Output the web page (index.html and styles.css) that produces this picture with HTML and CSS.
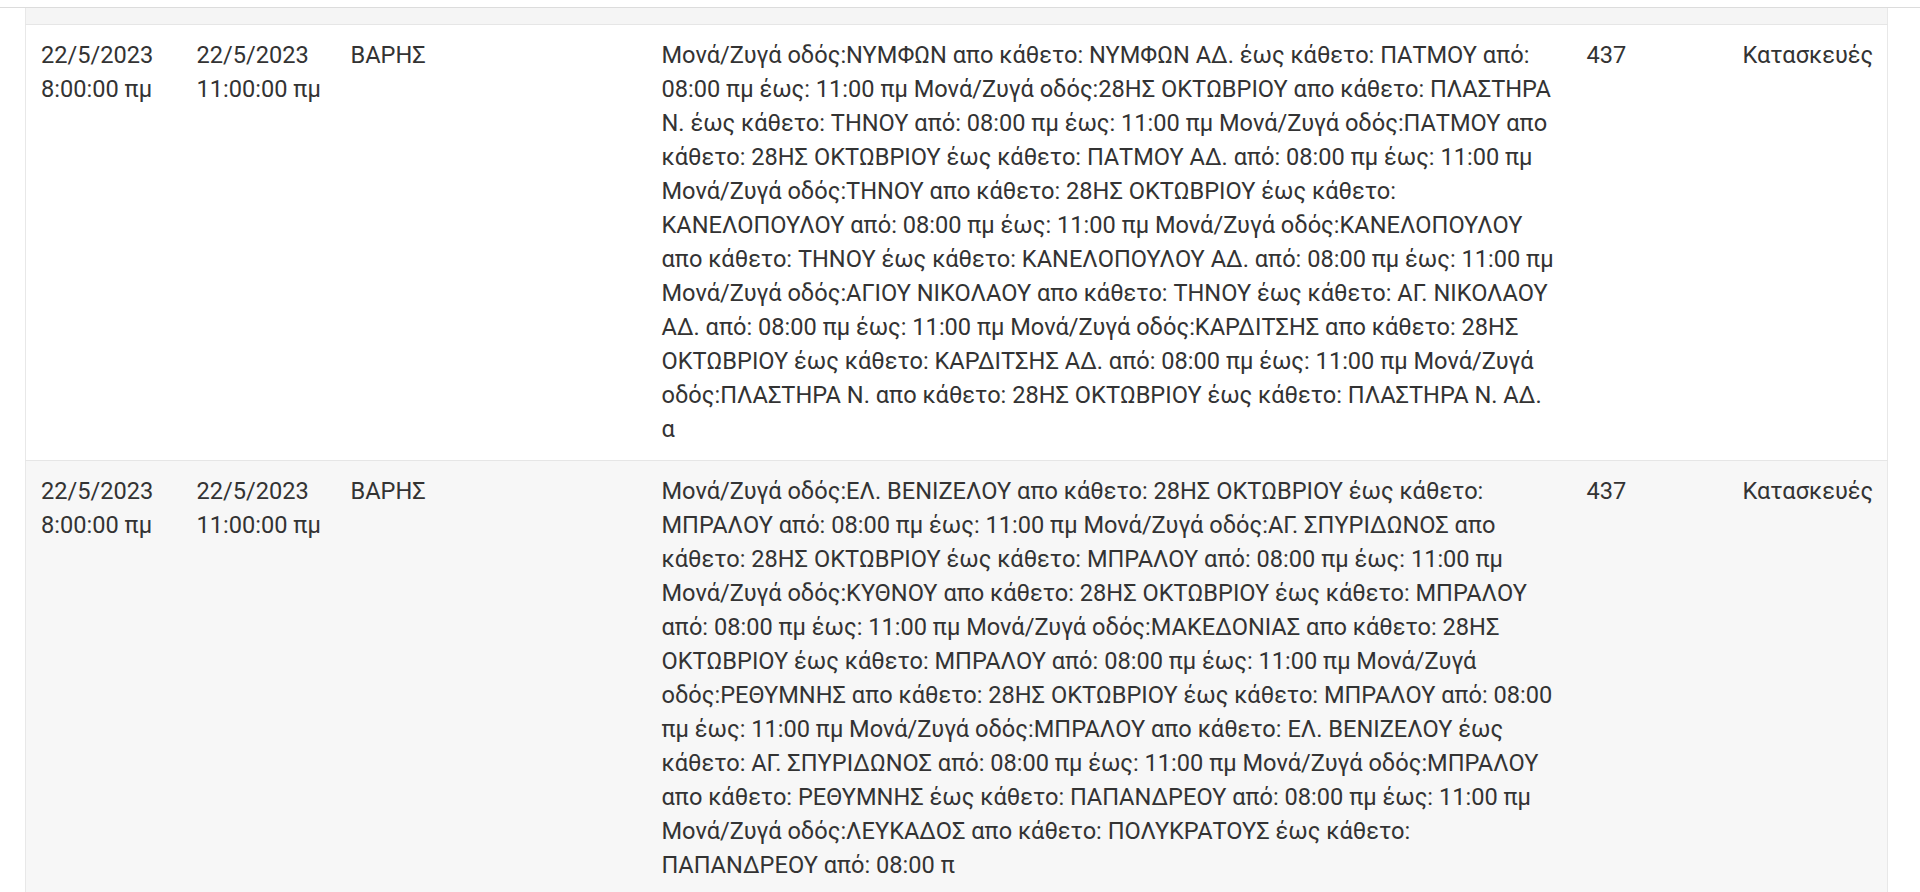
FILE: index.html
```html
<!DOCTYPE html>
<html lang="el">
<head>
  <meta charset="UTF-8">
  <meta name="viewport" content="width=device-width, initial-scale=1.0">
  <title>Διακοπές ρεύματος</title>
  <link rel="stylesheet" href="styles.css">
</head>
<body>

  <!-- Top strip above the results table -->
  <div class="topbar"></div>

  <!-- Results table -->
  <div class="table-wrap">
    <table class="outages">
      <colgroup>
        <col class="col-from">
        <col class="col-to">
        <col class="col-area">
        <col class="col-desc">
        <col class="col-num">
        <col class="col-reason">
      </colgroup>
      <thead>
        <tr class="head-row">
          <th></th><th></th><th></th><th></th><th></th><th></th>
        </tr>
      </thead>
      <tbody>
        <tr>
          <td class="when">22/5/2023<br>8:00:00 πμ</td>
          <td class="when">22/5/2023<br>11:00:00 πμ</td>
          <td>ΒΑΡΗΣ</td>
          <td>Μονά/Ζυγά οδός:ΝΥΜΦΩΝ απο κάθετο: ΝΥΜΦΩΝ ΑΔ. έως κάθετο: ΠΑΤΜΟΥ από: 08:00 πμ έως: 11:00 πμ Μονά/Ζυγά οδός:28ΗΣ ΟΚΤΩΒΡΙΟΥ απο κάθετο: ΠΛΑΣΤΗΡΑ Ν. έως κάθετο: ΤΗΝΟΥ από: 08:00 πμ έως: 11:00 πμ Μονά/Ζυγά οδός:ΠΑΤΜΟΥ απο κάθετο: 28ΗΣ ΟΚΤΩΒΡΙΟΥ έως κάθετο: ΠΑΤΜΟΥ ΑΔ. από: 08:00 πμ έως: 11:00 πμ Μονά/Ζυγά οδός:ΤΗΝΟΥ απο κάθετο: 28ΗΣ ΟΚΤΩΒΡΙΟΥ έως κάθετο: ΚΑΝΕΛΟΠΟΥΛΟΥ από: 08:00 πμ έως: 11:00 πμ Μονά/Ζυγά οδός:ΚΑΝΕΛΟΠΟΥΛΟΥ απο κάθετο: ΤΗΝΟΥ έως κάθετο: ΚΑΝΕΛΟΠΟΥΛΟΥ ΑΔ. από: 08:00 πμ έως: 11:00 πμ Μονά/Ζυγά οδός:ΑΓΙΟΥ ΝΙΚΟΛΑΟΥ απο κάθετο: ΤΗΝΟΥ έως κάθετο: ΑΓ. ΝΙΚΟΛΑΟΥ ΑΔ. από: 08:00 πμ έως: 11:00 πμ Μονά/Ζυγά οδός:ΚΑΡΔΙΤΣΗΣ απο κάθετο: 28ΗΣ ΟΚΤΩΒΡΙΟΥ έως κάθετο: ΚΑΡΔΙΤΣΗΣ ΑΔ. από: 08:00 πμ έως: 11:00 πμ Μονά/Ζυγά οδός:ΠΛΑΣΤΗΡΑ Ν. απο κάθετο: 28ΗΣ ΟΚΤΩΒΡΙΟΥ έως κάθετο: ΠΛΑΣΤΗΡΑ Ν. ΑΔ. α</td>
          <td>437</td>
          <td>Κατασκευές</td>
        </tr>
        <tr>
          <td class="when">22/5/2023<br>8:00:00 πμ</td>
          <td class="when">22/5/2023<br>11:00:00 πμ</td>
          <td>ΒΑΡΗΣ</td>
          <td>Μονά/Ζυγά οδός:ΕΛ. ΒΕΝΙΖΕΛΟΥ απο κάθετο: 28ΗΣ ΟΚΤΩΒΡΙΟΥ έως κάθετο: ΜΠΡΑΛΟΥ από: 08:00 πμ έως: 11:00 πμ Μονά/Ζυγά οδός:ΑΓ. ΣΠΥΡΙΔΩΝΟΣ απο κάθετο: 28ΗΣ ΟΚΤΩΒΡΙΟΥ έως κάθετο: ΜΠΡΑΛΟΥ από: 08:00 πμ έως: 11:00 πμ Μονά/Ζυγά οδός:ΚΥΘΝΟΥ απο κάθετο: 28ΗΣ ΟΚΤΩΒΡΙΟΥ έως κάθετο: ΜΠΡΑΛΟΥ από: 08:00 πμ έως: 11:00 πμ Μονά/Ζυγά οδός:ΜΑΚΕΔΟΝΙΑΣ απο κάθετο: 28ΗΣ ΟΚΤΩΒΡΙΟΥ έως κάθετο: ΜΠΡΑΛΟΥ από: 08:00 πμ έως: 11:00 πμ Μονά/Ζυγά οδός:ΡΕΘΥΜΝΗΣ απο κάθετο: 28ΗΣ ΟΚΤΩΒΡΙΟΥ έως κάθετο: ΜΠΡΑΛΟΥ από: 08:00 πμ έως: 11:00 πμ Μονά/Ζυγά οδός:ΜΠΡΑΛΟΥ απο κάθετο: ΕΛ. ΒΕΝΙΖΕΛΟΥ έως κάθετο: ΑΓ. ΣΠΥΡΙΔΩΝΟΣ από: 08:00 πμ έως: 11:00 πμ Μονά/Ζυγά οδός:ΜΠΡΑΛΟΥ απο κάθετο: ΡΕΘΥΜΝΗΣ έως κάθετο: ΠΑΠΑΝΔΡΕΟΥ από: 08:00 πμ έως: 11:00 πμ Μονά/Ζυγά οδός:ΛΕΥΚΑΔΟΣ απο κάθετο: ΠΟΛΥΚΡΑΤΟΥΣ έως κάθετο: ΠΑΠΑΝΔΡΕΟΥ από: 08:00 π</td>
          <td>437</td>
          <td>Κατασκευές</td>
        </tr>
      </tbody>
    </table>
  </div>
</body>
</html>
```

FILE: styles.css
```css
/* Base styles */
* {
  margin: 0;
  padding: 0;
  box-sizing: border-box;
}

body {
  font-family: Roboto, 'Liberation Sans', Arial, sans-serif;
  background-color: #ffffff;
  color: #333;
  overflow: hidden;
}

/* Thin strip at the very top */
.topbar {
  height: 8px;
  border-bottom: 1px solid #dcdcdc;
}

/* Table wrapper */
.table-wrap {
  padding: 0 32px 0 25px;
}

.outages {
  width: 100%;
  table-layout: fixed;
  border-collapse: collapse;
  border-left: 1px solid #e8e8e8;
  border-right: 1px solid #e8e8e8;
  font-size: 23.6px;
  line-height: 34px;
}

.col-from   { width: 156px; }
.col-to     { width: 154px; }
.col-area   { width: 311px; }
.col-desc   { width: 925px; }
.col-num    { width: 156px; }
.col-reason { width: auto; }

/* Empty header strip */
.head-row th {
  height: 16px;
  background-color: #f5f5f5;
  border-bottom: 1px solid #e6e6e6;
}

.outages td {
  padding: 13px 15px 14px;
  vertical-align: top;
  text-align: left;
  font-weight: 400;
  border-bottom: 1px solid #e6e6e6;
}

/* Date + time stacked, never broken further */
.outages td.when {
  white-space: nowrap;
}

/* Striped rows */
.outages tbody tr:nth-child(even) {
  background-color: #f7f7f7;
}
```
